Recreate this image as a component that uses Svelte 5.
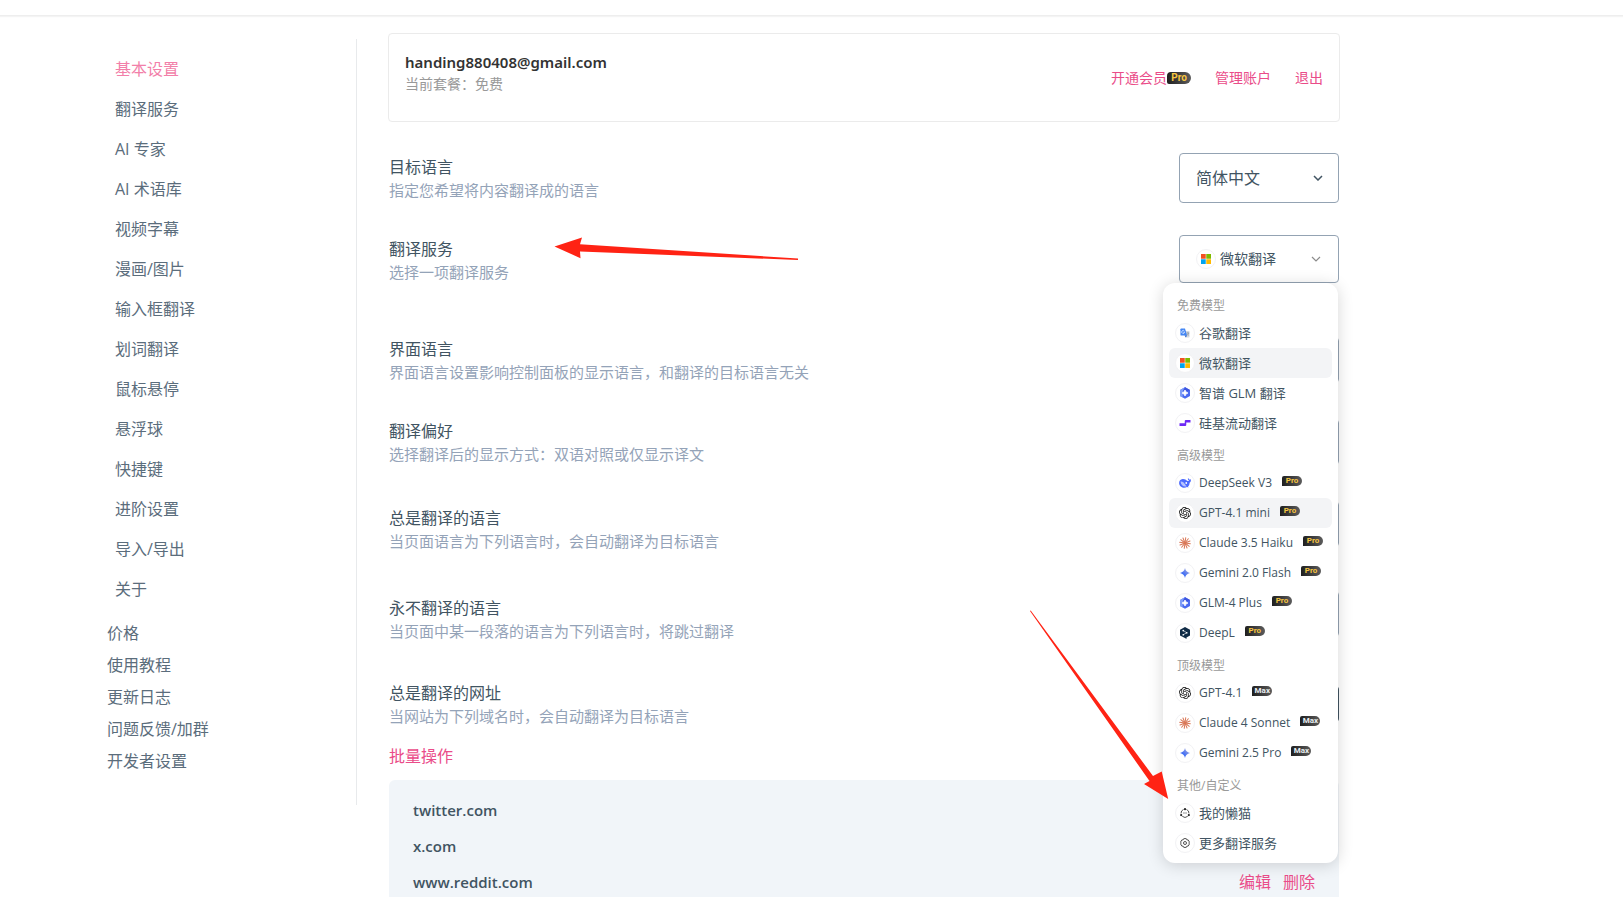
<script lang="ts">
  type Model = { name: string; icon: string; badge?: string; active?: boolean };
  type Group = { title: string; items: Model[] };

  const menu: string[] = [
    '基本设置', '翻译服务', 'AI 专家', 'AI 术语库', '视频字幕', '漫画/图片', '输入框翻译',
    '划词翻译', '鼠标悬停', '悬浮球', '快捷键', '进阶设置', '导入/导出', '关于'
  ];
  const links: string[] = ['价格', '使用教程', '更新日志', '问题反馈/加群', '开发者设置'];
  const sites: string[] = ['twitter.com', 'x.com', 'www.reddit.com'];
  const largeIcons: string[] = ['glm', 'silicon', 'deepseek', 'openai', 'claude', 'deepl'];

  const groups: Group[] = [
    {
      title: '免费模型',
      items: [
        { name: '谷歌翻译', icon: 'google' },
        { name: '微软翻译', icon: 'microsoft', active: true },
        { name: '智谱 GLM 翻译', icon: 'glm' },
        { name: '硅基流动翻译', icon: 'silicon' }
      ]
    },
    {
      title: '高级模型',
      items: [
        { name: 'DeepSeek V3', icon: 'deepseek', badge: 'Pro' },
        { name: 'GPT-4.1 mini', icon: 'openai', badge: 'Pro', active: true },
        { name: 'Claude 3.5 Haiku', icon: 'claude', badge: 'Pro' },
        { name: 'Gemini 2.0 Flash', icon: 'gemini', badge: 'Pro' },
        { name: 'GLM-4 Plus', icon: 'glm', badge: 'Pro' },
        { name: 'DeepL', icon: 'deepl', badge: 'Pro' }
      ]
    },
    {
      title: '顶级模型',
      items: [
        { name: 'GPT-4.1', icon: 'openai', badge: 'Max' },
        { name: 'Claude 4 Sonnet', icon: 'claude', badge: 'Max' },
        { name: 'Gemini 2.5 Pro', icon: 'gemini', badge: 'Max' }
      ]
    },
    {
      title: '其他/自定义',
      items: [
        { name: '我的懒猫', icon: 'custom' },
        { name: '更多翻译服务', icon: 'settings' }
      ]
    }
  ];

  let current = $state('基本设置');
  let service = $state('微软翻译');
  let open = $state(true);

  function pick(name: string) {
    service = name;
    open = false;
  }
</script>

{#snippet logo(icon: string)}
  <span class="logo">
    <svg viewBox="0 0 24 24" class:large={largeIcons.includes(icon)} aria-hidden="true">
      {#if icon === 'google'}
        <path d="M10 7h11a2 2 0 0 1 2 2v12a2 2 0 0 1-2 2h-7z" fill="#d5d9df" />
        <path d="M3 1h9l5 17H3a2 2 0 0 1-2-2V3a2 2 0 0 1 2-2z" fill="#4285f4" />
        <path d="M11 18h6l-3 5z" fill="#2b63c8" />
        <path d="M10.500 7.500A3.500 3.500 0 1 0 11 10H8" fill="none" stroke="#fff" stroke-width="1.600" />
        <path d="M16 12h6M19 10v2M21 12q-1 4-4 6M17 13q1 3 4 5" fill="none" stroke="#76808c" stroke-width="1.200" />
      {:else if icon === 'microsoft'}
        <path d="M0 0h11.400v11.400H0z" fill="#f25022" />
        <path d="M12.600 0H24v11.400H12.600z" fill="#7fba00" />
        <path d="M0 12.600h11.400V24H0z" fill="#00a4ef" />
        <path d="M12.600 12.600H24V24H12.600z" fill="#ffb900" />
      {:else if icon === 'glm'}
        <path d="M12 0.500l10 5.700v11.600l-10 5.700-10-5.700V6.200z" fill="#4b6bf0" />
        <path d="M12 0.500L2 6.200v11.600L7 21l1-14 9-4z" fill="#7e9cf8" />
        <path d="M12 0.500l10 5.700-5 3L8 7z" fill="#3d55e0" />
        <path d="M12 6l2 4 4 2-4 2-2 4-2-4-4-2 4-2z" fill="#fff" stroke="#fff" stroke-width="1.500" />
      {:else if icon === 'silicon'}
        <path d="M13.500 6H23v5h-8.500v5a2 2 0 0 1-2 2H1v-5.500h10.500V8a2 2 0 0 1 2-2z" fill="#6e29f6" />
      {:else if icon === 'deepseek'}
        <path d="M23.700 4.500c-1 .6-1.700.4-2.400 1-1-2-2.700-1.600-3-3.500-1.500 2 .2 4.200 1.600 5.300-.9.900-2.200.8-3.500 0C14.200 5.900 10.800 3.300 7.200 4 2.700 4.800 0 8 .2 12.500.5 18 5.500 21.500 10.500 21.500c2 0 4-.5 5.500-1.300l3 .9-.9-2.300c2-1.800 3-4.200 3.100-7.500 2-.9 2.900-3.900 2.500-6.800z" fill="#4d6bfe" />
        <path d="M3 9c4-.5 7 2 9 5.500 1 1.700 2 3 3.400 4C9.500 20 4 17 3 9z" fill="#fff" opacity=".6" />
        <circle cx="14.500" cy="12" r="1.800" fill="#fff" />
      {:else if icon === 'openai'}
        <path
          d="M22.2819 9.8211a5.9847 5.9847 0 0 0-.5157-4.9108 6.0462 6.0462 0 0 0-6.5098-2.9A6.0651 6.0651 0 0 0 4.9807 4.1818a5.9847 5.9847 0 0 0-3.9977 2.9 6.0462 6.0462 0 0 0 .7427 7.0966 5.98 5.98 0 0 0 .511 4.9107 6.051 6.051 0 0 0 6.5146 2.9001A5.9847 5.9847 0 0 0 13.2599 24a6.0557 6.0557 0 0 0 5.7718-4.2058 5.9894 5.9894 0 0 0 3.9977-2.9001 6.0557 6.0557 0 0 0-.7475-7.0729zm-9.022 12.6081a4.4755 4.4755 0 0 1-2.8764-1.0408l.1419-.0804 4.7783-2.7582a.7948.7948 0 0 0 .3927-.6813v-6.7369l2.02 1.1686a.071.071 0 0 1 .038.052v5.5826a4.504 4.504 0 0 1-4.4945 4.4944zm-9.6607-4.1254a4.4708 4.4708 0 0 1-.5346-3.0137l.142.0852 4.783 2.7582a.7712.7712 0 0 0 .7806 0l5.8428-3.3685v2.3324a.0804.0804 0 0 1-.0332.0615L9.74 19.9502a4.4992 4.4992 0 0 1-6.1408-1.6464zM2.3408 7.8956a4.485 4.485 0 0 1 2.3655-1.9728V11.6a.7664.7664 0 0 0 .3879.6765l5.8144 3.3543-2.0201 1.1685a.0757.0757 0 0 1-.071 0l-4.8303-2.7865A4.504 4.504 0 0 1 2.3408 7.872zm16.5963 3.8558L13.1038 8.364 15.1192 7.2a.0757.0757 0 0 1 .071 0l4.8303 2.7913a4.4944 4.4944 0 0 1-.6765 8.1042v-5.6772a.79.79 0 0 0-.407-.667zm2.0107-3.0231l-.142-.0852-4.7735-2.7818a.7759.7759 0 0 0-.7854 0L9.409 9.2297V6.8974a.0662.0662 0 0 1 .0284-.0615l4.8303-2.7866a4.4992 4.4992 0 0 1 6.6802 4.66zM8.3065 12.863l-2.02-1.1638a.0804.0804 0 0 1-.038-.0567V6.0742a4.4992 4.4992 0 0 1 7.3757-3.4537l-.142.0805L8.704 5.459a.7948.7948 0 0 0-.3927.6813zm1.0976-2.3654l2.602-1.4998 2.6069 1.4998v2.9994l-2.5974 1.4997-2.6067-1.4997Z"
          fill="#111"
        />
      {:else if icon === 'claude'}
        <g stroke="#d97757" stroke-width="2" stroke-linecap="round">
          {#each [0, 30, 60, 90, 120, 150, 180, 210, 240, 270, 300, 330] as turn}
            <path d="M12 12V1.200" transform={`rotate(${turn + 8} 12 12)`} />
          {/each}
        </g>
      {:else if icon === 'gemini'}
        <defs>
          <linearGradient id="gemini" x1="0" y1="1" x2="1" y2="0">
            <stop offset="0.350" stop-color="#3f6df5" />
            <stop offset="1" stop-color="#b9b6d8" />
          </linearGradient>
        </defs>
        <path d="M12 0c1.500 7 5 10.500 12 12-7 1.500-10.500 5-12 12-1.500-7-5-10.500-12-12 7-1.500 10.500-5 12-12z" fill="url(#gemini)" />
      {:else if icon === 'deepl'}
        <path d="M12 0l10 5.700v11.500L15 21v3l-4-2.500-9-4.300V5.700z" fill="#0f2b46" />
        <path d="M8.500 7l7 4.500-7 4" fill="none" stroke="#fff" stroke-width="1.200" />
        <g fill="#fff">
          <circle cx="8.500" cy="7.200" r="1.700" />
          <circle cx="15.500" cy="11.500" r="1.700" />
          <circle cx="8.500" cy="15.500" r="1.700" />
        </g>
      {:else if icon === 'custom'}
        <g fill="none" stroke="#333" stroke-width="2">
          <path d="M8.500 3.500A9.500 9.500 0 0 0 2.500 13M15.500 3.500a9.500 9.500 0 0 1 6 9.500M5.500 20a10 10 0 0 0 13 0" />
          <path d="M8 12h3M13 12h3" />
        </g>
        <g fill="#222">
          <circle cx="12" cy="2.800" r="2.600" />
          <circle cx="2.800" cy="17" r="2.600" />
          <circle cx="21.200" cy="17" r="2.600" />
        </g>
      {:else}
        <g fill="none" stroke="#333" stroke-width="2" stroke-linejoin="round">
          <path d="M9 1.500h6l1.500 3 3.200.2 3 5.100L21 12l1.700 2.200-3 5.100-3.200.2-1.500 3H9l-1.500-3-3.200-.2-3-5.100L3 12 1.300 9.800l3-5.100 3.200-.2z" />
          <circle cx="12" cy="12" r="3.600" />
        </g>
      {/if}
    </svg>
  </span>
{/snippet}

{#snippet chevron()}
  <svg class="chevron" viewBox="0 0 10 6" aria-hidden="true">
    <path d="M1 1l4 4 4-4" />
  </svg>
{/snippet}

{#snippet heading(title: string, desc: string)}
  <div class="heading">
    <h2>{title}</h2>
    <p>{desc}</p>
  </div>
{/snippet}

<div class="page">
  <header class="topbar"></header>

  <div class="layout">
    <nav class="sidebar">
      <ul class="menu">
        {#each menu as item}
          <li><a href="#top" class:active={item === current} onclick={() => (current = item)}>{item}</a></li>
        {/each}
      </ul>
      <ul class="links">
        {#each links as item}
          <li><a href="#top">{item}</a></li>
        {/each}
      </ul>
    </nav>

    <main class="content">
      <section class="account">
        <div>
          <div class="email">handing880408@gmail.com</div>
          <div class="plan">当前套餐：免费</div>
        </div>
        <div class="account-links">
          <a href="#upgrade">开通会员<span class="badge large">Pro</span></a>
          <a href="#account">管理账户</a>
          <a href="#logout">退出</a>
        </div>
      </section>

      <section class="settings">
        <div class="row language">
          {@render heading('目标语言', '指定您希望将内容翻译成的语言')}
          <div class="field">
            <select aria-label="目标语言">
              <option>简体中文</option>
              <option>English</option>
            </select>
            {@render chevron()}
          </div>
        </div>

        <div class="row service">
          {@render heading('翻译服务', '选择一项翻译服务')}
          <div class="picker">
            <button class="trigger" type="button" aria-expanded={open} onclick={() => (open = !open)}>
              {@render logo('microsoft')}
              <span>{service}</span>
              {@render chevron()}
            </button>
            {#if open}
              <div class="dropdown">
                {#each groups as group}
                  <div class="group">{group.title}</div>
                  {#each group.items as item}
                    <button class="item" class:active={item.active} type="button" onclick={() => pick(item.name)}>
                      {@render logo(item.icon)}
                      <span class:model={item.badge}>{item.name}</span>
                      {#if item.badge}
                        <span class="badge" class:max={item.badge === 'Max'}>{item.badge}</span>
                      {/if}
                    </button>
                  {/each}
                {/each}
              </div>
            {/if}
          </div>
        </div>

        <div class="row">
          {@render heading('界面语言', '界面语言设置影响控制面板的显示语言，和翻译的目标语言无关')}
          <div class="field">
            <select aria-label="界面语言"></select>
          </div>
        </div>

        <div class="row">
          {@render heading('翻译偏好', '选择翻译后的显示方式：双语对照或仅显示译文')}
          <div class="field">
            <select aria-label="翻译偏好"></select>
          </div>
        </div>

        <div class="row tall">
          {@render heading('总是翻译的语言', '当页面语言为下列语言时，会自动翻译为目标语言')}
          <div class="field">
            <select aria-label="总是翻译的语言"></select>
          </div>
        </div>

        <div class="row tall">
          {@render heading('永不翻译的语言', '当页面中某一段落的语言为下列语言时，将跳过翻译')}
          <div class="field">
            <select aria-label="永不翻译的语言"></select>
          </div>
        </div>

        <div class="row last">
          {@render heading('总是翻译的网址', '当网站为下列域名时，会自动翻译为目标语言')}
          <button class="add" type="button" aria-label="添加网址"></button>
        </div>

        <a class="batch" href="#batch">批量操作</a>

        <ul class="sites">
          {#each sites as site, i}
            <li>
              <span>{site}</span>
              {#if i === sites.length - 1}
                <span class="actions">
                  <a href="#edit">编辑</a>
                  <a href="#delete">删除</a>
                </span>
              {/if}
            </li>
          {/each}
        </ul>
      </section>

      <!-- pointers to the service row and the custom models -->
      <svg class="arrows" viewBox="0 0 952 864" aria-hidden="true">
        <path d="M166.500 213.500L194 204.500l-2 6.700L410 225.500v1.500L192 218.500l.500 6.700z" />
        <path d="M642 578l.700-.5L765 743l8.700-4.500 6.500 27.500L756 751l5.500-3z" />
      </svg>
    </main>
  </div>
</div>

<style>
  :global(body) {
    background: #fff;
  }

  .page {
    height: 100vh;
    overflow: hidden;
    font-family: 'Open Sans', 'Noto Sans CJK SC', sans-serif;
    font-size: 16px;
    line-height: 24px;
    color: #415462;
  }

  ul {
    margin: 0;
    padding: 0;
    list-style: none;
  }

  a {
    color: #ea4c89;
    text-decoration: none;
  }

  button,
  select {
    font: inherit;
    color: inherit;
    cursor: pointer;
  }

  .topbar {
    height: 15px;
    border-bottom: 1px solid #eee;
    box-shadow: 0 1px 1px #f4f4f4;
  }

  .layout {
    display: flex;
    align-items: flex-start;
    gap: 31px;
    max-width: 1241px;
    padding: 17px 24px 0 99px;
  }

  .sidebar {
    box-sizing: border-box;
    flex: 0 0 258px;
    margin-top: 6px;
    padding: 10px 8px 28px;
    border-right: 1px solid #e8eaec;
  }

  .sidebar a {
    display: block;
    color: #5b6d7c;
  }

  .menu {
    margin-bottom: 8px;
  }

  .menu a {
    padding: 8px;
  }

  .links a {
    padding: 4px 0;
  }

  .sidebar a.active {
    color: #f27fa9;
  }

  .content {
    position: relative;
    flex: 1;
  }

  .account {
    display: flex;
    justify-content: space-between;
    align-items: center;
    box-sizing: border-box;
    height: 89px;
    padding: 0 16px;
    border: 1px solid #ebebeb;
    border-radius: 4px;
  }

  .email {
    font-family: 'Noto Sans', sans-serif;
    font-size: 15px;
    font-weight: 600;
    color: #333;
  }

  .plan {
    padding-bottom: 11px;
    font-size: 14px;
    line-height: 20px;
    color: #999;
  }

  .account-links {
    display: flex;
    gap: 24px;
    font-size: 14px;
  }

  .account-links a {
    display: flex;
    align-items: center;
  }

  .badge {
    box-sizing: border-box;
    flex: none;
    width: 20px;
    height: 10px;
    border-radius: 2px 5px 5px 0;
    background: linear-gradient(90deg, #1f1f1f, #5c5c5c);
    color: #f8c640;
    font-family: Roboto, sans-serif;
    font-size: 8px;
    font-weight: 700;
    line-height: 10px;
    text-align: center;
  }

  .badge.large {
    width: 24px;
    height: 12px;
    border-radius: 4px 6px 6px 2px;
    font-size: 10px;
    line-height: 12px;
  }

  .badge.max {
    color: #e8eef2;
  }

  .settings {
    display: flex;
    flex-direction: column;
    margin-top: 31px;
    padding: 0 1px;
  }

  .row {
    display: flex;
    justify-content: space-between;
    align-items: center;
    min-height: 46px;
    margin-bottom: 36px;
  }

  .row.language {
    min-height: 50px;
    margin-bottom: 32px;
  }

  .row.service {
    min-height: 50px;
    margin-bottom: 52px;
  }

  .row.tall {
    min-height: 56px;
    margin-bottom: 34px;
  }

  .row.last {
    margin-bottom: 17px;
  }

  .heading h2 {
    margin: 0;
    font-size: 16px;
    font-weight: 400;
  }

  .heading p {
    margin: 0;
    font-size: 15px;
    line-height: 22px;
    color: #94a3b8;
  }

  .field,
  .picker {
    position: relative;
    align-self: flex-start;
    width: 160px;
  }

  .field select,
  .trigger {
    box-sizing: border-box;
    display: block;
    width: 100%;
    height: 46px;
    padding: 0 16px;
    border: 1px solid #94a3b3;
    border-radius: 4px;
    background: #fff;
    appearance: none;
  }

  .language select {
    height: 50px;
  }

  .chevron {
    width: 10px;
    height: 6px;
    fill: none;
    stroke: #415462;
    stroke-width: 1.5;
  }

  .field .chevron {
    position: absolute;
    top: 22px;
    right: 16px;
    pointer-events: none;
  }

  .trigger {
    display: flex;
    align-items: center;
    gap: 4px;
    height: 48px;
    font-size: 14px;
  }

  .trigger .chevron {
    margin: 0 1px 0 auto;
    stroke: #8c8c8c;
    stroke-width: 1.2;
  }

  .logo {
    display: flex;
    align-items: center;
    justify-content: center;
    box-sizing: border-box;
    flex: none;
    width: 20px;
    height: 20px;
    border: 1px solid #f2f2f4;
    border-radius: 50%;
    background: #fff;
  }

  .logo svg {
    width: 10px;
    height: 10px;
  }

  .logo svg.large {
    width: 12px;
    height: 12px;
  }

  .dropdown {
    position: absolute;
    z-index: 2;
    top: 48px;
    right: 1px;
    box-sizing: border-box;
    width: 175px;
    padding: 5px 6px;
    border-radius: 12px;
    background: #fff;
    box-shadow: 0 2px 16px rgba(0, 0, 0, 0.16);
  }

  .group {
    padding: 6px 8px 0;
    font-size: 12px;
    color: #999;
  }

  .item {
    display: flex;
    align-items: center;
    gap: 4px;
    width: 100%;
    height: 30px;
    padding: 0 6px;
    border: 0;
    border-radius: 6px;
    background: none;
    font-size: 13px;
    white-space: nowrap;
  }

  .item.active {
    background: #f3f4f6;
  }

  .item .model {
    font-size: 12px;
  }

  .item .badge {
    margin: 0 0 4px 6px;
  }

  .add {
    width: 88px;
    height: 36px;
    border: 0;
    border-radius: 4px;
    background: #415462;
  }

  .batch {
    align-self: flex-start;
    margin-bottom: 12px;
  }

  .sites {
    padding: 12px 24px;
    border-radius: 6px;
    background: #f1f5f9;
  }

  .sites li {
    display: flex;
    justify-content: space-between;
    padding: 6px 0;
    font-size: 15px;
    font-weight: 600;
  }

  .actions {
    display: flex;
    gap: 12px;
    font-size: 16px;
    font-weight: 400;
  }

  .arrows {
    position: absolute;
    z-index: 3;
    top: 0;
    left: 0;
    width: 952px;
    height: 864px;
    fill: #ff2314;
    pointer-events: none;
  }
</style>
